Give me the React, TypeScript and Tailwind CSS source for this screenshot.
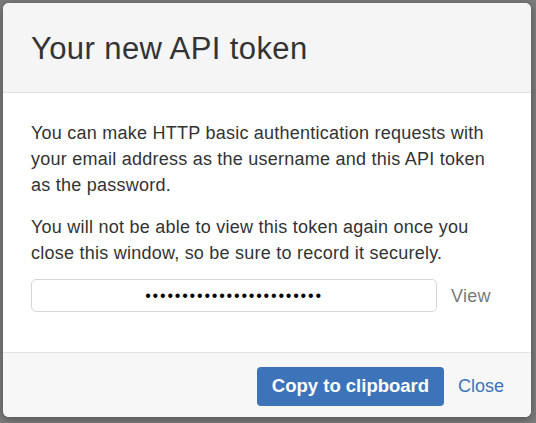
import { useState } from "react";

const TOKEN = "abcdefghijklmnopqrstuvwx";

export default function App() {
  const [visible, setVisible] = useState(false);

  return (
    <div
      className="w-[536px] h-[423px] bg-[#7b7b7b] p-[3px] pr-[5px] pb-[6px]"
      style={{ fontFamily: '"Liberation Sans", Arial, sans-serif' }}
    >
      <div className="h-full flex flex-col rounded-[6px] overflow-hidden bg-white shadow-[0_2px_8px_rgba(0,0,0,0.35)]">
        {/* Header */}
        <div className="h-[90px] shrink-0 flex items-center px-[28px] bg-[#f5f5f5] border-b border-[#e2e2e2]">
          <h1 className="text-[31px] leading-none text-[#333] pt-[2px] tracking-[0.4px]">
            Your new API token
          </h1>
        </div>

        {/* Body */}
        <div className="flex-1 pt-[27px] pl-[28px] pr-[30px] text-[18px] leading-[26px] text-[#333] tracking-[0.24px]">
          <p>
            You can make HTTP basic authentication requests with your email address as the username and
            this API token as the password.
          </p>
          <p className="mt-[16px]">
            You will not be able to view this token again once you close this window, so be sure to
            record it securely.
          </p>
          <div className="mt-[13px] flex items-center gap-[14px]">
            <div className="w-[406px] h-[33px] rounded-[5px] border border-[#d6d6d6] bg-white flex items-center justify-center">
              {visible ? (
                <span className="text-[15px] text-[#333]">{TOKEN}</span>
              ) : (
                <span className="text-[16px] text-black tracking-[1.8px]">{"•".repeat(24)}</span>
              )}
            </div>
            <button onClick={() => setVisible(!visible)} className="text-[18px] text-[#7a7a7a]">
              View
            </button>
          </div>
        </div>

        {/* Footer */}
        <div className="h-[65px] shrink-0 flex items-center justify-end gap-[14px] pr-[27px] bg-[#f7f7f7] border-t border-[#e4e4e4]">
          <button className="w-[187px] h-[39px] mt-[2px] rounded-[4px] bg-[#3d74b9] text-white text-[18.5px] font-bold">
            Copy to clipboard
          </button>
          <button className="text-[18px] text-[#3d74b9] mt-[2px]">Close</button>
        </div>
      </div>
    </div>
  );
}
